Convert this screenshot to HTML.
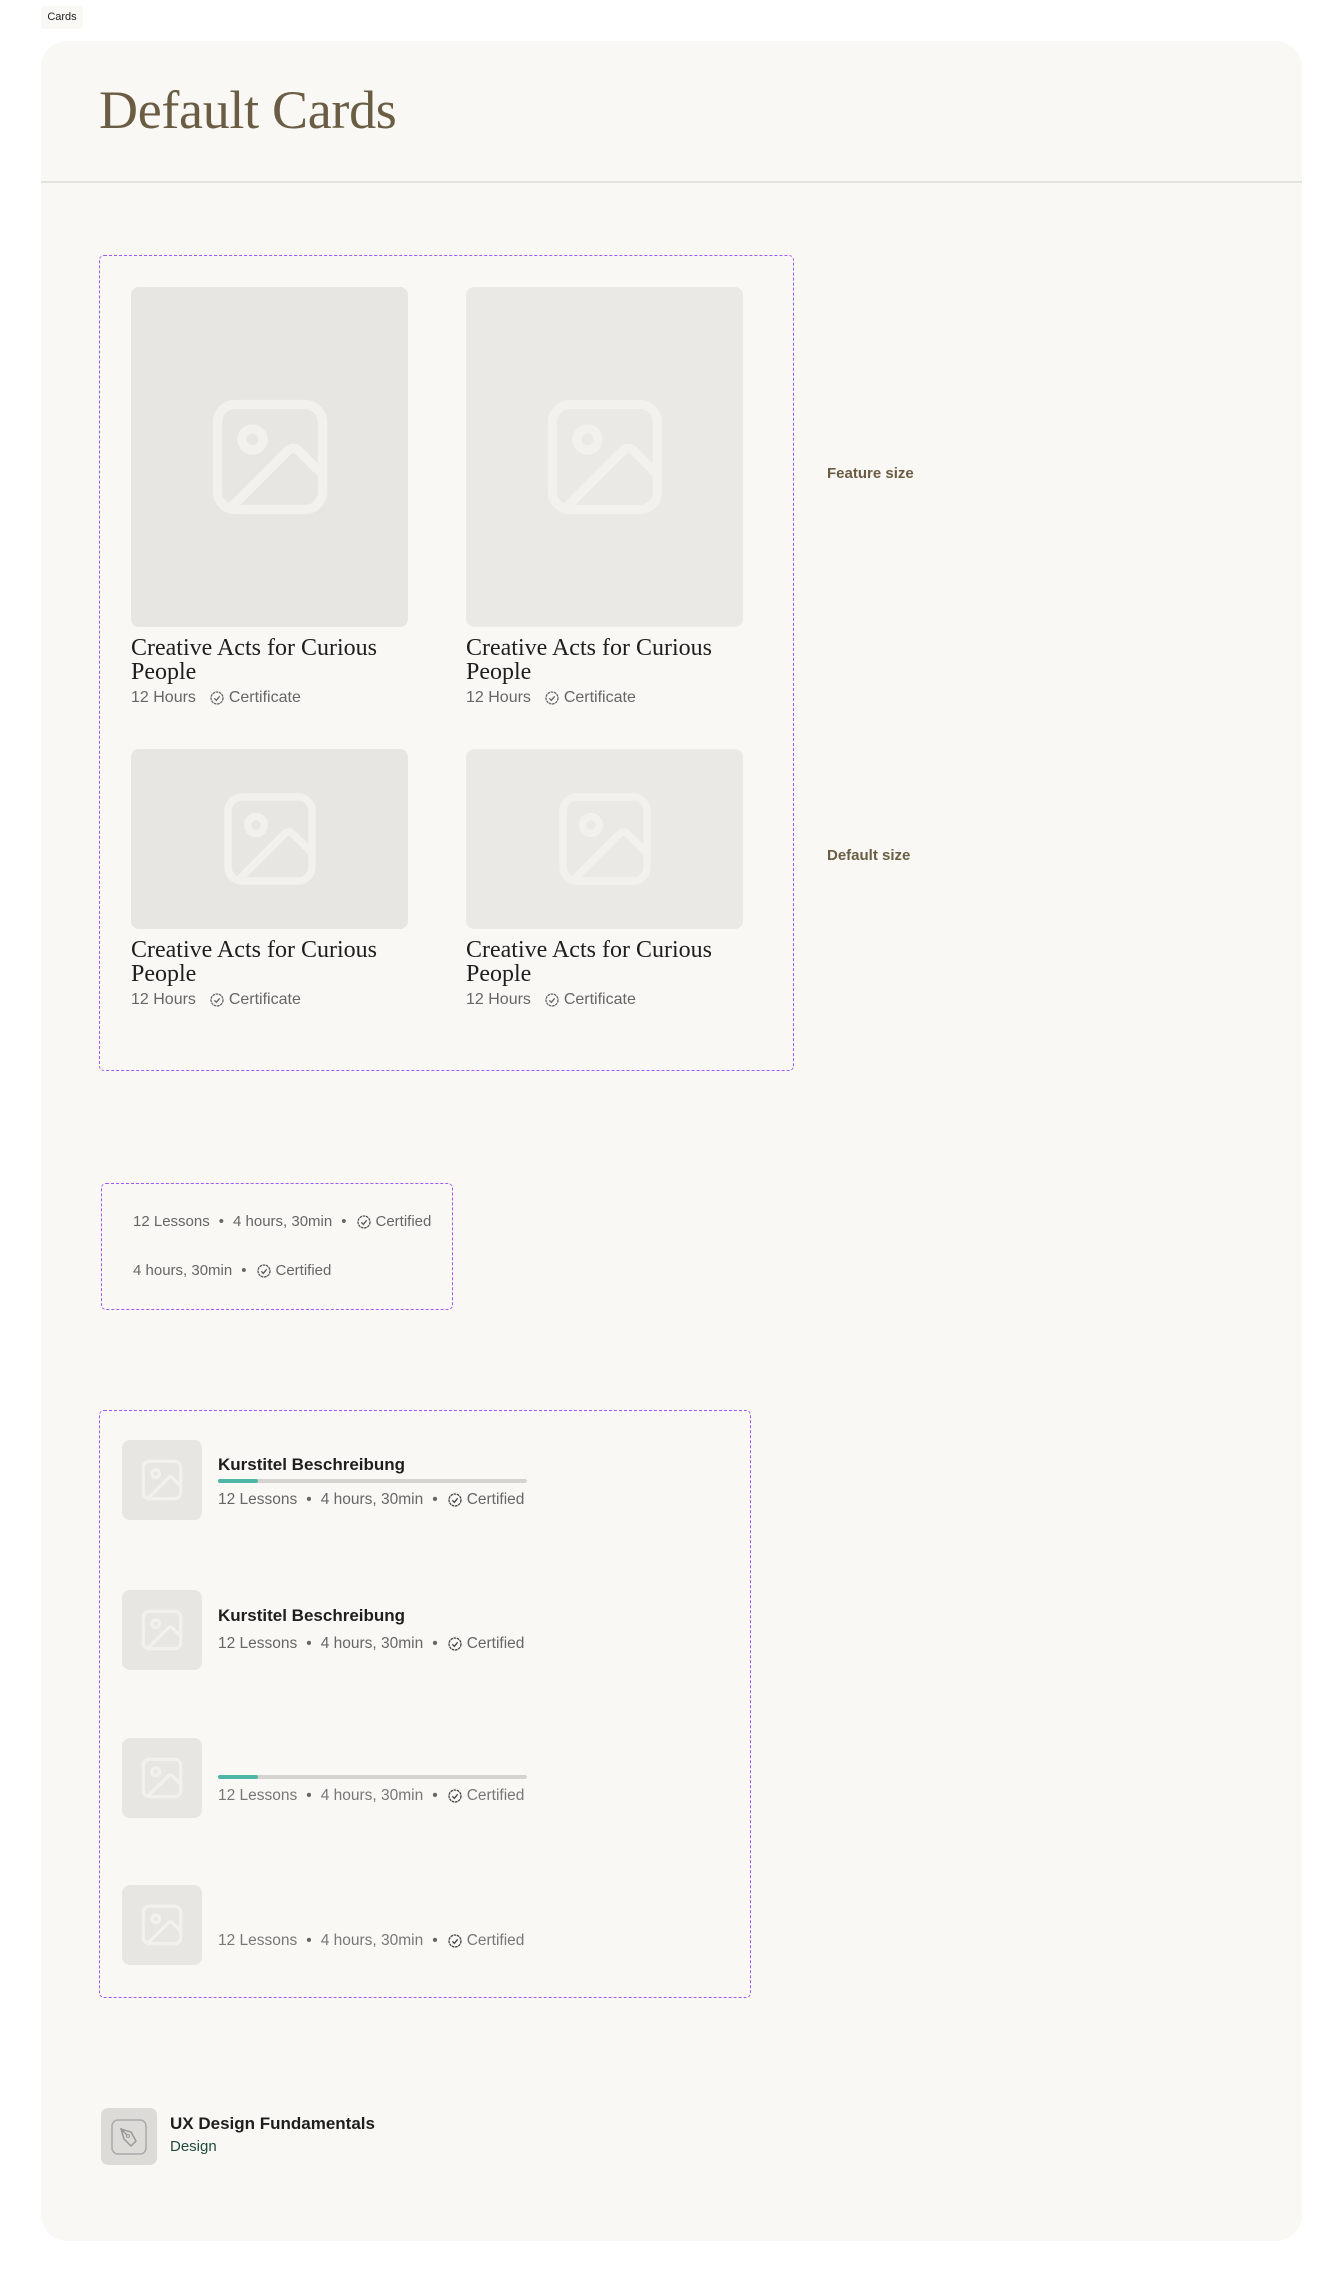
<!DOCTYPE html>
<html><head><meta charset="utf-8"><style>
*{margin:0;padding:0;box-sizing:border-box}
body{width:1341px;height:2281px;background:#fff;position:relative;font-family:"Liberation Sans",sans-serif;overflow:hidden}
.a{position:absolute}
.tag{left:41px;top:6px;width:42px;height:23px;background:#f9f8f4;font-size:11px;line-height:23px;text-align:center;color:#222;border-radius:3px}
.panel{left:41px;top:41px;width:1261px;height:2200px;background:#f9f8f4;border-radius:26px}
.title{left:99px;top:79px;font-family:"Liberation Serif",serif;font-size:54px;color:#6b5d44;letter-spacing:-0.3px}
.line{left:41px;top:181px;width:1261px;height:2px;background:#e4e2dd}
.dash{border:1.5px dashed #a259ff;border-radius:5px}
.img{background:#e7e6e2;border-radius:8px;display:flex;align-items:center;justify-content:center}
.ct{font-family:"Liberation Serif",serif;font-size:24px;line-height:24px;color:#1e1e1e;width:290px}
.meta{font-size:15.5px;color:#666;white-space:nowrap;display:flex;align-items:center;gap:4px}
.lbl{font-size:15px;font-weight:bold;color:#6b5d44}
.ck{display:inline-block;vertical-align:middle}
.sep{margin:0 5px;color:#666}
.kt{font-size:17px;font-weight:bold;color:#1e1e1e}
.bar{height:4px;width:309px;background:#d6d4d0;border-radius:2px}
.bar i{display:block;height:4px;width:40px;background:#4db6a6;border-radius:2px}
.thumb{width:80px;height:80px;background:#e7e6e2;border-radius:8px;display:flex;align-items:center;justify-content:center}
</style></head><body>
<svg width="0" height="0" style="position:absolute"><defs>
<symbol id="ic" viewBox="0 0 24 24"><rect x="3" y="3" width="18" height="18" rx="3" fill="none" stroke="#f2f1ee" stroke-width="1.6"/><circle cx="9" cy="9" r="1.8" fill="none" stroke="#f2f1ee" stroke-width="1.6"/><path d="M5 21 L15 11 Q16 10 17 11 L21 15" fill="none" stroke="#f2f1ee" stroke-width="1.6"/></symbol>
<symbol id="cert" viewBox="0 0 24 24"><circle cx="12" cy="12" r="9" fill="none" stroke="currentColor" stroke-width="2" stroke-dasharray="4 1"/><path d="M8 12.5l3 3 5-6" fill="none" stroke="currentColor" stroke-width="2"/></symbol>
</defs></svg>
<div class="a tag">Cards</div>
<div class="a panel"></div>
<div class="a title">Default Cards</div>
<div class="a line"></div>

<div class="a dash" style="left:99px;top:255px;width:695px;height:816px"></div>
<div class="a img" style="left:131px;top:287px;width:277px;height:340px"><svg width="140" height="140"><use href="#ic"/></svg></div>
<div class="a img" style="left:466px;top:287px;width:277px;height:340px;background:#eae9e5"><svg width="140" height="140"><use href="#ic"/></svg></div>
<div class="a ct" style="left:131px;top:636px">Creative Acts for Curious People</div>
<div class="a ct" style="left:466px;top:636px">Creative Acts for Curious People</div>
<div class="a meta" style="left:131px;top:689px;font-size:16px">12 Hours&nbsp;&nbsp;<svg class="ck" width="16" height="16" style="color:#666"><use href="#cert"/></svg>Certificate</div>
<div class="a meta" style="left:466px;top:689px;font-size:16px">12 Hours&nbsp;&nbsp;<svg class="ck" width="16" height="16" style="color:#666"><use href="#cert"/></svg>Certificate</div>

<div class="a img" style="left:131px;top:749px;width:277px;height:180px"><svg width="112" height="112"><use href="#ic"/></svg></div>
<div class="a img" style="left:466px;top:749px;width:277px;height:180px;background:#eae9e5"><svg width="112" height="112"><use href="#ic"/></svg></div>
<div class="a ct" style="left:131px;top:938px">Creative Acts for Curious People</div>
<div class="a ct" style="left:466px;top:938px">Creative Acts for Curious People</div>
<div class="a meta" style="left:131px;top:991px;font-size:16px">12 Hours&nbsp;&nbsp;<svg class="ck" width="16" height="16" style="color:#666"><use href="#cert"/></svg>Certificate</div>
<div class="a meta" style="left:466px;top:991px;font-size:16px">12 Hours&nbsp;&nbsp;<svg class="ck" width="16" height="16" style="color:#666"><use href="#cert"/></svg>Certificate</div>

<div class="a lbl" style="left:827px;top:465px">Feature size</div>
<div class="a lbl" style="left:827px;top:847px">Default size</div>

<div class="a dash" style="left:101px;top:1183px;width:352px;height:127px"></div>
<div class="a meta" style="left:133px;top:1213px;font-size:15px">12 Lessons<span class="sep">•</span>4 hours, 30min<span class="sep">•</span><svg class="ck" width="16" height="16" style="color:#555"><use href="#cert"/></svg>Certified</div>
<div class="a meta" style="left:133px;top:1262px;font-size:15px">4 hours, 30min<span class="sep">•</span><svg class="ck" width="16" height="16" style="color:#555"><use href="#cert"/></svg>Certified</div>

<div class="a dash" style="left:99px;top:1410px;width:652px;height:588px"></div>

<div class="a thumb" style="left:122px;top:1440px"><svg width="50" height="50"><use href="#ic"/></svg></div>
<div class="a kt" style="left:218px;top:1455px">Kurstitel Beschreibung</div>
<div class="a bar" style="left:218px;top:1479px"><i></i></div>
<div class="a meta" style="left:218px;top:1491px">12 Lessons<span class="sep">•</span>4 hours, 30min<span class="sep">•</span><svg class="ck" width="16" height="16" style="color:#444"><use href="#cert"/></svg>Certified</div>

<div class="a thumb" style="left:122px;top:1590px"><svg width="50" height="50"><use href="#ic"/></svg></div>
<div class="a kt" style="left:218px;top:1606px">Kurstitel Beschreibung</div>
<div class="a meta" style="left:218px;top:1635px">12 Lessons<span class="sep">•</span>4 hours, 30min<span class="sep">•</span><svg class="ck" width="16" height="16" style="color:#444"><use href="#cert"/></svg>Certified</div>

<div class="a thumb" style="left:122px;top:1738px"><svg width="50" height="50"><use href="#ic"/></svg></div>
<div class="a bar" style="left:218px;top:1775px"><i></i></div>
<div class="a meta" style="left:218px;top:1787px;color:#777">12 Lessons<span class="sep">•</span>4 hours, 30min<span class="sep">•</span><svg class="ck" width="16" height="16" style="color:#444"><use href="#cert"/></svg>Certified</div>

<div class="a thumb" style="left:122px;top:1885px"><svg width="50" height="50"><use href="#ic"/></svg></div>
<div class="a meta" style="left:218px;top:1932px;color:#777">12 Lessons<span class="sep">•</span>4 hours, 30min<span class="sep">•</span><svg class="ck" width="16" height="16" style="color:#444"><use href="#cert"/></svg>Certified</div>

<div class="a" style="left:101px;top:2108px;width:56px;height:57px;background:#dcdbd8;border-radius:7px;display:flex;align-items:center;justify-content:center">
<svg width="40" height="40" viewBox="0 0 40 40"><rect x="3" y="3" width="34" height="34" rx="6" fill="none" stroke="#aaa" stroke-width="1.5"/><path d="M12 12 L22 15 L27 24 L22 29 L15 22 Z M12 12 L18 18" fill="none" stroke="#999" stroke-width="1.5"/><circle cx="19" cy="19" r="1.5" fill="none" stroke="#999"/></svg></div>
<div class="a kt" style="left:170px;top:2114px">UX Design Fundamentals</div>
<div class="a" style="left:170px;top:2138px;font-size:15px;color:#1e4a3f">Design</div>
</body></html>
